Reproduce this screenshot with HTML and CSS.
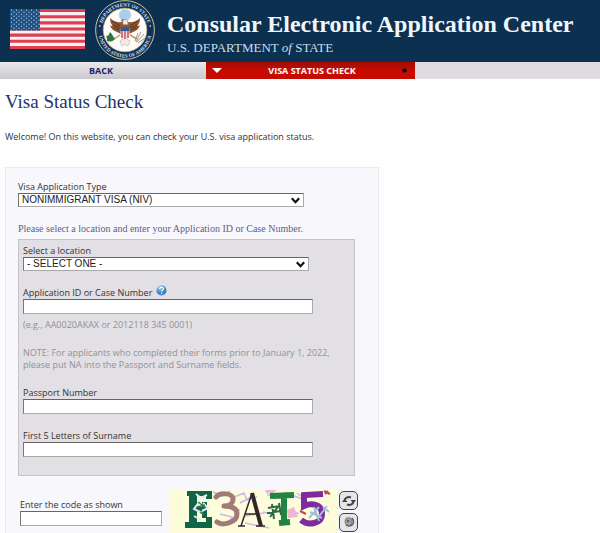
FILE: index.html
```html
<!DOCTYPE html>
<html lang="en">
<head>
<meta charset="utf-8">
<title>Visa Status Check</title>
<link rel="stylesheet" href="styles.css">
</head>
<body>
<header class="banner">
  <svg class="flag" viewBox="0 0 75 40" preserveAspectRatio="none" aria-hidden="true">
    <defs>
      <pattern id="stars" width="5" height="4" patternUnits="userSpaceOnUse">
        <circle cx="1.5" cy="1.2" r=".65" fill="#c4d8ea"/><circle cx="4" cy="3.2" r=".65" fill="#c4d8ea"/>
      </pattern>
    </defs>
    <rect width="75" height="40" fill="#f8f0f2"/>
    <path d="M0 1.54h75M0 7.69h75M0 13.85h75M0 20h75M0 26.15h75M0 32.3h75M0 38.46h75" stroke="#dc3f4d" stroke-width="3.08"/>
    <rect width="30" height="21.5" fill="#1d4f85"/>
    <rect width="30" height="21.5" fill="url(#stars)"/>
  </svg>
  <svg class="seal" viewBox="0 0 60 60" aria-hidden="true">
    <defs>
      <path id="arc-top" d="M6.5 30a23.5 23.5 0 0 1 47 0"/>
      <path id="arc-bottom" d="M3.4 31a26.6 26.6 0 0 0 53.2 0"/>
    </defs>
    <circle cx="30" cy="30" r="29.4" fill="#12315a" stroke="#c9c98c"/>
    <circle cx="30" cy="30" r="21.8" fill="#fdfcfa" stroke="#b9b287" stroke-width=".8"/>
    <text class="seal-text"><textPath href="#arc-top" startOffset="50%" text-anchor="middle">DEPARTMENT OF STATE</textPath></text>
    <text class="seal-text"><textPath href="#arc-bottom" startOffset="50%" text-anchor="middle">UNITED STATES OF AMERICA</textPath></text>
    <circle cx="4.8" cy="26" r=".8" fill="#fff"/><circle cx="55.2" cy="26" r=".8" fill="#fff"/>
    <circle cx="30" cy="15" r="6" fill="#a9cfea" stroke="#d4dde3"/>
    <path d="M27 22c-3 1-8 0-12-4 0 4 1 6 3 8-1 0-2 0-3-1 1 4 4 6 7 7l4 2h8l4-2c3-1 6-3 7-7-1 1-2 1-3 1 2-2 3-4 3-8-4 4-9 5-12 4l-1-2-3-1-3 1z" fill="#8a5630"/>
    <path d="M17 21l8 5M17.500 25l7 3M19 28l5 2M43 21l-8 5M42.500 25l-7 3M41 28l-5 2" stroke="#4c2d20" stroke-width=".8"/>
    <path d="M28 20l4-.5 1 5h-5zM25 41l5-3 5 3-2 5-3-2-3 2z" fill="#f4eee1" stroke="#ad9e8d" stroke-width=".5"/>
    <path d="M25.500 28h9v7q0 4-4.500 5-4.500-1-4.500-5z" fill="#f2dfe2"/>
    <path d="M27 30v8M30 30v9M33 30v8" stroke="#c43f54" stroke-width="1.300"/>
    <path d="M25.500 27.500h9v3.500h-9z" fill="#315599"/>
    <path d="M25 35l-6 4M35 35l7 4" stroke="#c79a42" stroke-width="1.500"/>
    <path d="M20 39c-3 3-5 3-8 2 0-2 0-3-1-5 3 0 3-2 4-4 2 2 3 4 5 7z" fill="#2f7542"/>
    <path d="M41 42l5-10M42 42l7-8M40 41l3-8M43 43l7-5" stroke="#a19687" stroke-width="1"/>
  </svg>
  <div class="brand">
    <div class="brand-name">Consular Electronic Application Center</div>
    <div class="brand-dept">U.S. DEPARTMENT <i>of</i> STATE</div>
  </div>
</header>
<nav class="nav">
  <a class="nav-back" href="#">BACK</a>
  <a class="nav-current" href="#">
    <svg class="nav-arrow" viewBox="0 0 10 5" aria-hidden="true"><path d="M0 0h10L5 5z" fill="#fff"/></svg>
    <span>VISA STATUS CHECK</span>
    <svg class="nav-dot" viewBox="0 0 5 5" aria-hidden="true"><path d="M0 2.500L1.500.5h2L5 2.500l-1.500 2h-2z"/></svg>
  </a>
</nav>
<main class="content">
  <h1 class="title">Visa Status Check</h1>
  <p class="welcome">Welcome! On this website, you can check your U.S. visa application status.</p>
  <form class="panel">
    <label class="label" for="type">Visa Application Type</label>
    <div class="select-wrap">
      <select class="control" id="type"><option>NONIMMIGRANT VISA (NIV)</option></select>
      <svg class="chevron" viewBox="0 0 8 6" aria-hidden="true"><path d="M.7 1L4 4.500 7.300 1"/></svg>
    </div>
    <p class="prompt">Please select a location and enter your Application ID or Case Number.</p>
    <div class="group">
      <div class="field">
        <label class="label" for="location">Select a location</label>
        <div class="select-wrap">
          <select class="control" id="location"><option>- SELECT ONE -</option></select>
          <svg class="chevron" viewBox="0 0 8 6" aria-hidden="true"><path d="M.7 1L4 4.500 7.300 1"/></svg>
        </div>
      </div>
      <div class="field">
        <div class="label-row">
          <label class="label" for="case">Application ID or Case Number</label>
          <svg class="help" viewBox="0 0 12 12" aria-hidden="true">
            <defs><radialGradient id="ball" cx=".35" cy=".25"><stop offset="0" stop-color="#9bcbee"/><stop offset="1" stop-color="#3b82c4"/></radialGradient></defs>
            <circle cx="6" cy="6" r="5.500" fill="url(#ball)"/>
            <path d="M4 4.300c.2-2.600 4.200-2.300 4.200 0C8.200 5.600 6.200 5.500 6.200 7.200M6.200 8.500v1.200" fill="none" stroke="#fff" stroke-width="1.400"/>
          </svg>
        </div>
        <input class="control" id="case" type="text">
        <p class="hint">(e.g., AA0020AKAX or 2012118 345 0001)</p>
        <p class="note">NOTE: For applicants who completed their forms prior to January 1, 2022, please put NA into the Passport and Surname fields.</p>
      </div>
      <div class="field">
        <label class="label" for="passport">Passport Number</label>
        <input class="control" id="passport" type="text">
      </div>
      <div class="field">
        <label class="label" for="surname">First 5 Letters of Surname</label>
        <input class="control" id="surname" type="text">
      </div>
    </div>
    <div class="captcha">
      <div class="captcha-entry">
        <label class="label" for="code">Enter the code as shown</label>
        <input class="control" id="code" type="text">
      </div>
      <svg class="captcha-image" viewBox="0 0 167 43" aria-hidden="true">
        <rect width="167" height="43" fill="#fdfddb"/>
        <g fill="none" stroke="#c9bce8" stroke-width="1.500">
          <path d="M43 2l9 4 8-5M62 8l12-5 3 7 10-3M70 13l13-7M50 24l12 3-5 8M58 18l12 2M75 33l24 5M75 26l19-3M93 22l12 3M115 2l17 7M120 20l9 4M97 4l9 5M127 3l8 6 6-4"/>
        </g>
        <path d="M95 0h12l-4 3h-7zM117 20l7-3 4 10-10 1z" fill="#edb8d0"/>
        <path d="M17 1h25v8h-6V6h-9v11h5v-5h5v16h-5v-6h-5v10h9v-5h6v11H15v-6h4V6h-2z" fill="#116447"/>
        <path d="M26 4l5 4 6-3M30 11l-6 8 8 4M33 13l5 5-6 3M24 26l7 4" fill="none" stroke="#e0eef0" stroke-width="2"/>
        <path d="M28 12l7 5M27 17l8-2M30 22l4 3" stroke="#39785f" stroke-width="1.500"/>
        <path d="M46 7c4-5 17-4 17 2 0 5-5 7-9 7 7 0 13 2 13 8 0 9-15 12-20 8" fill="none" stroke="#a17b78" stroke-width="5" stroke-linecap="round" stroke-linejoin="round"/>
        <path d="M71 36l11-33" fill="none" stroke="#33262b" stroke-width="1.500"/>
        <path d="M82 3l9 33" stroke="#33262b" stroke-width="4"/>
        <path d="M75 24h13M68 36h7M86 36h9" stroke="#33262b" stroke-width="1.500"/>
        <path d="M100 6l24-1M114 5v29M109 33l11-1" fill="none" stroke="#238345" stroke-width="6"/>
        <path d="M98 18l12-2M97 23l14-2M102 14l2 15M108 17l-8 10M109 13l2 12" stroke="#2c6c43" stroke-width="2"/>
        <path d="M153 4l-19 1v11c8-4 18-1 18 8 0 10-14 12-21 6" fill="none" stroke="#7e2b9f" stroke-width="6"/>
        <path d="M140 22l12 6M139 28l10-11M147 29l10-13M153 17l6 5M144 17l5 14" stroke="#a3bdda" stroke-width="2"/>
        <path d="M130 21l6 3M154 1l6 3M155 4l3-3" stroke="#c5415b" stroke-width="2"/>
      </svg>
      <div class="captcha-actions">
        <button class="icon-button" type="button" aria-label="Refresh code">
          <svg viewBox="0 0 14 12" aria-hidden="true"><path d="M2.500 6c0-3.500 3.500-4.500 6.500-3.500M11.500 6c0 3.500-3.500 4.500-6.500 3.500" fill="none" stroke="#444" stroke-width="2"/><path d="M14 5H8.500l2.800 3.500zM0 7h5.500L2.700 3.500z" fill="#444"/></svg>
        </button>
        <button class="icon-button" type="button" aria-label="Play audio">
          <svg viewBox="0 0 14 12" aria-hidden="true"><ellipse cx="6.500" cy="4.500" rx="3.500" ry="4" fill="#aaa" stroke="#777"/><path d="M10 1c3 4 1 8-3 8l-3-1" fill="none" stroke="#666" stroke-width="1.600"/><circle cx="6" cy="4" r="1.500" fill="#666"/><path d="M3 9l3 2" stroke="#ccc"/></svg>
        </button>
      </div>
    </div>
  </form>
</main>
</body>
</html>
```
FILE: styles.css
```css
* { box-sizing: border-box; }

body {
  margin: 0;
  background: #fefefe;
  color: #333;
  font: 9px/12px "Open Sans", "Noto Sans", sans-serif;
}

h1, p { margin: 0; }

.banner {
  display: flex;
  align-items: flex-start;
  height: 62px;
  padding-left: 10px;
  background: #0c304f;
  color: #f0f7fc;
  font-family: "Liberation Serif", serif;
  white-space: nowrap;
}

.flag { width: 75px; height: 40px; margin-top: 9px; }
.seal { width: 60px; height: 60px; margin-left: 10px; }
.seal-text { fill: #dce3e8; font: bold 5px "Liberation Serif", serif; }
.brand { margin: 10px 0 0 12px; }
.brand-name { font-size: 24px; font-weight: bold; line-height: 28px; }
.brand-dept { color: #c9dcea; font-size: 13px; line-height: 20px; }

.nav {
  display: grid;
  grid-template-columns: 206px 209px 1fr;
  height: 17px;
  background: #dedcde;
  font-size: 9px;
  font-weight: bold;
  line-height: 17px;
  text-align: center;
}
.nav a { text-decoration: none; }
.nav-back {
  padding-right: 4px;
  background: linear-gradient(#e9e9eb, #c9c9cd);
  color: #27226a;
}
.nav-current {
  display: flex;
  align-items: center;
  justify-content: space-between;
  padding: 0 8px 0 6px;
  background: linear-gradient(#9e0c05, #c90c02 50%, #c40c02);
  color: #fff;
}
.nav-arrow { width: 10px; height: 5px; }
.nav-dot { width: 5px; height: 5px; }

.content { padding: 10px 5px 0; }
.title {
  color: #28346a;
  font: 19px/26px "Liberation Serif", serif;
}
.welcome { margin-top: 16px; }

.panel {
  max-width: 374px;
  margin-top: 24px;
  padding: 13px 12px 0;
  border: 1px solid #ebe9ee;
  border-bottom: 0;
  background: #f8f7fb;
}
.label { display: block; }
.control {
  display: block;
  width: 100%;
  height: 15px;
  margin: 0;
  padding: 0 3px;
  border: 1px solid #aaa;
  border-top-color: #666;
  border-left-color: #777;
  border-radius: 0;
  background: #fff;
  color: #222;
  font: 10px/12px "Liberation Sans", sans-serif;
}
select.control { height: 14px; appearance: none; }
.select-wrap { position: relative; max-width: 286px; }
.chevron {
  position: absolute;
  top: 4px;
  right: 4px;
  width: 9px;
  height: 7px;
  fill: none;
  stroke: #111;
  stroke-width: 2;
  pointer-events: none;
}
.prompt {
  margin-top: 15px;
  color: #5e6088;
  font: 10px/14px "Liberation Serif", serif;
}

.group {
  display: grid;
  gap: 16px;
  max-width: 337px;
  margin-top: 3px;
  padding: 5px 4px 18px;
  border: 1px solid #c5c3c8;
  background: #e2e0e4;
}
.group input { max-width: 290px; }
.label-row { display: flex; gap: 4px; }
.help { width: 11px; height: 11px; margin-top: -2px; }
.hint { margin-top: 5px; color: #919095; }
.note { margin-top: 16px; color: #919095; }

.captcha { display: flex; margin-top: 14px; padding-left: 2px; }
.captcha-entry { width: 142px; padding-top: 9px; }
.captcha-image { width: 167px; height: 43px; margin-left: 8px; }
.captcha-actions { display: grid; align-content: start; gap: 3px; padding: 1px 0 0 2px; }
.icon-button {
  display: grid;
  place-items: center;
  width: 19px;
  height: 19px;
  padding: 0;
  border: 1px solid #444;
  border-radius: 5px;
  background: #e6e6e6;
}
.icon-button svg { width: 14px; height: 12px; }
```
